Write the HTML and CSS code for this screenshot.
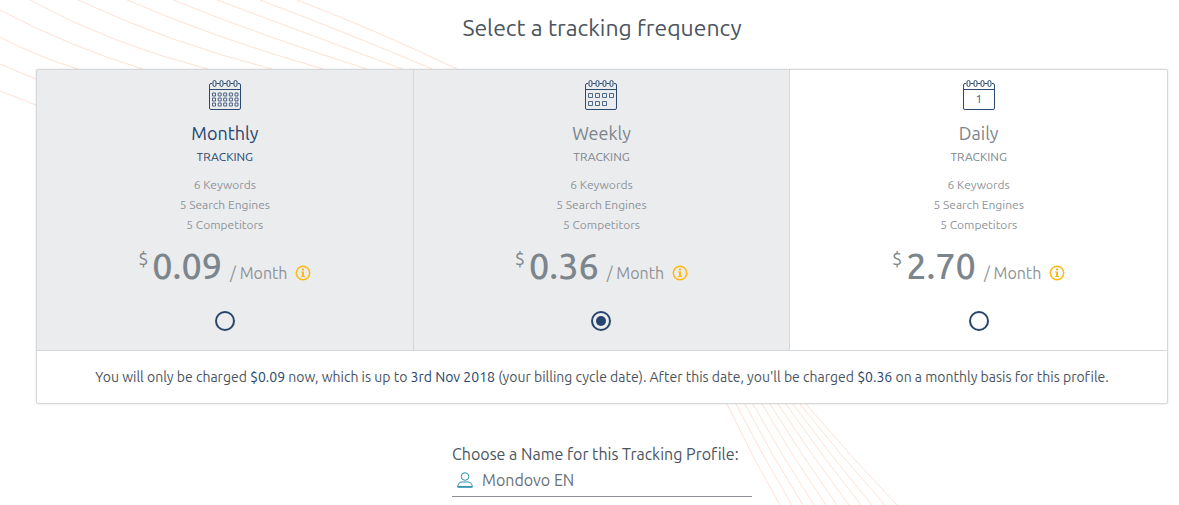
FILE: index.html
```html
<!DOCTYPE html>
<html lang="en">
<head>
  <meta charset="UTF-8" />
  <meta name="viewport" content="width=device-width, initial-scale=1.0"/>
  <title>Select a tracking frequency</title>
  <link rel="stylesheet" href="styles.css">
</head>
<body>
  <!-- decorative lines -->
  <svg class="lines" width="1179" height="505" aria-hidden="true">
    <path d="M0 91L36 105M0 64Q18 72 36 79M0 37Q38 57 78 69M0 10Q70 47 143 69M30 0Q110 44 208 69M78 0Q170 43 272 69M127 0Q215 38 323 69M173 0Q265 37 367 69M217 0L402 69M260 0Q350 34 432 69M297 0Q380 32 457 69"/>
    <path d="M727 404Q751 455 780 505M736 404Q762 455 792 505M745 404Q772 456 803 505M753 404Q782 456 814 505M762 404Q792 456 826 505M770 404Q802 456 837 505M778 404Q812 456 849 505M786 404Q822 456 861 505M793 404Q831 456 872 505M800 404Q841 456 885 505M806 404Q850 456 897 505"/>
  </svg>

  <!-- shared icons -->
  <svg class="sprite" aria-hidden="true">
    <symbol id="calendar" viewBox="0 0 32 31">
      <path d="M3 3.500H2Q.5 3.500 .5 5V28Q.5 29.500 2 29.500H30Q31.500 29.500 31.500 28V5Q31.500 3.500 30 3.500H29M7.500 3.500H10.500M14.500 3.500H17.500M21.500 3.500H24.500M.5 9.500H31.500"/>
      <rect x="4" y=".5" width="3" height="6" rx="1.500"/>
      <rect x="11" y=".5" width="3" height="6" rx="1.500"/>
      <rect x="18" y=".5" width="3" height="6" rx="1.500"/>
      <rect x="25" y=".5" width="3" height="6" rx="1.500"/>
    </symbol>
    <symbol id="info" viewBox="0 0 16 16">
      <circle cx="8" cy="8" r="6.700" fill="none" stroke="currentColor" stroke-width="1.500"/>
      <path d="M7 3.500h2v2H7zM6 6.500h3v4.500h1v1H6v-1h1V7.500H6z" fill="currentColor"/>
    </symbol>
  </svg>

  <main>
    <h1>Select a tracking frequency</h1>

    <form>
      <div class="card">
        <div class="plans">
          <label class="plan shaded current">
            <svg class="calendar" width="32" height="31" aria-hidden="true">
              <use href="#calendar"/>
              <g class="days">
                <path d="M3.500 13h3v3h-3zM9.200 13h3v3h-3zM14.700 13h3v3h-3zM20.400 13h3v3h-3zM26 13h3v3h-3zM3.500 18h3v3h-3zM9.200 18h3v3h-3zM14.700 18h3v3h-3zM20.400 18h3v3h-3zM26 18h3v3h-3zM3.500 23h3v3h-3zM9.200 23h3v3h-3zM14.700 23h3v3h-3zM20.400 23h3v3h-3zM26 23h3v3h-3z"/>
              </g>
            </svg>
            <span class="name">Monthly</span>
            <span class="type">TRACKING</span>
            <span class="features">6 Keywords<br>5 Search Engines<br>5 Competitors</span>
            <span class="price">
              <span class="currency">$</span>
              <span class="amount">0.09</span>
              <span class="period">/ Month</span>
              <svg class="info" width="16" height="16"><use href="#info"/></svg>
            </span>
            <input type="radio" name="frequency" value="monthly">
          </label>

          <label class="plan shaded">
            <svg class="calendar" width="32" height="31" aria-hidden="true">
              <use href="#calendar"/>
              <g class="days">
                <path d="M3.500 13.500h4v4h-4zM10.500 13.500h4v4h-4zM17.500 13.500h4v4h-4zM24.500 13.500h4v4h-4zM3.500 21.500h4v4h-4zM10.500 21.500h4v4h-4zM17.500 21.500h4v4h-4z"/>
              </g>
            </svg>
            <span class="name">Weekly</span>
            <span class="type">TRACKING</span>
            <span class="features">6 Keywords<br>5 Search Engines<br>5 Competitors</span>
            <span class="price">
              <span class="currency">$</span>
              <span class="amount">0.36</span>
              <span class="period">/ Month</span>
              <svg class="info" width="16" height="16"><use href="#info"/></svg>
            </span>
            <input type="radio" name="frequency" value="weekly" checked>
          </label>

          <label class="plan">
            <svg class="calendar" width="32" height="31" aria-hidden="true">
              <use href="#calendar"/>
              <text x="16" y="23">1</text>
            </svg>
            <span class="name">Daily</span>
            <span class="type">TRACKING</span>
            <span class="features">6 Keywords<br>5 Search Engines<br>5 Competitors</span>
            <span class="price">
              <span class="currency">$</span>
              <span class="amount">2.70</span>
              <span class="period">/ Month</span>
              <svg class="info" width="16" height="16"><use href="#info"/></svg>
            </span>
            <input type="radio" name="frequency" value="daily">
          </label>
        </div>
        <p class="note">You will only be charged <b>$0.09</b> now, which is up to <b>3rd Nov 2018</b> (your billing cycle date). After this date, you'll be charged <b>$0.36</b> on a monthly basis for this profile.</p>
      </div>

      <div class="profile">
        <label for="profileName">Choose a Name for this Tracking Profile:</label>
        <div class="field">
          <svg class="user" width="16" height="16" aria-hidden="true">
            <circle cx="8" cy="4.500" r="3.800"/>
            <path d="M.7 15.300Q.7 10.300 5 10H11Q15.300 10.300 15.300 15.300ZM1 14.500H15"/>
          </svg>
          <input type="text" id="profileName" name="profileName" value="Mondovo EN">
        </div>
      </div>
    </form>
  </main>
</body>
</html>
```
FILE: styles.css
```css
* {
  box-sizing: border-box;
}

body {
  margin: 0;
  background: #fff;
  color: #4a545e;
  font-family: Ubuntu, "Noto Sans", sans-serif;
  font-variant-ligatures: none;
}

.lines {
  position: absolute;
  top: 0;
  left: 0;
  z-index: -1;
  fill: none;
  stroke: #fde2d4;
}

.sprite {
  display: none;
}

main {
  padding: 12px 11px 0 36px;
}

h1 {
  margin: 0 0 25px;
  font-size: 23px;
  font-weight: 400;
  line-height: 32px;
  text-align: center;
}

.card {
  border: 1px solid #d5d8db;
  border-radius: 2px;
  background: #fff;
  box-shadow: 0 0 2px rgba(0, 0, 0, 0.15);
}

.plans {
  display: grid;
  grid-template-columns: repeat(3, 1fr);
  border-bottom: 1px solid #d5d8db;
}

.plan {
  display: flex;
  flex-direction: column;
  align-items: center;
  padding: 10px 0 19px;
  color: #7d858c;
  cursor: pointer;
}

.shaded {
  border-right: 1px solid #d5d8db;
  background: #ebecee;
}

.calendar {
  fill: none;
  stroke: #2b4a70;
}

.calendar text {
  fill: #4b6585;
  stroke: none;
  font-size: 12px;
  text-anchor: middle;
}

.days {
  opacity: 0.8;
}

.name {
  margin-top: 10px;
  font-size: 18px;
  line-height: 24px;
}

.type {
  margin-top: 2px;
  font-size: 12px;
  line-height: 20px;
}

.current .name,
.current .type {
  color: #27456c;
}

.features {
  margin-top: 8px;
  color: #8e9499;
  font-size: 12px;
  line-height: 20px;
  text-align: center;
}

.price {
  display: flex;
  align-items: baseline;
  margin-top: 8px;
  line-height: 46px;
}

.currency {
  align-self: flex-start;
  margin-right: 4px;
  font-size: 18px;
  line-height: 30px;
}

.amount {
  font-size: 36px;
  font-weight: 500;
}

.period {
  margin: 0 8px;
  color: #8e9499;
  font-size: 16px;
}

.info {
  align-self: center;
  margin-top: 6px;
  color: #fdb913;
}

input[type="radio"] {
  appearance: none;
  width: 20px;
  height: 20px;
  margin: 15px 0 0;
  padding: 3px;
  border: 2px solid #27456c;
  border-radius: 50%;
}

input[type="radio"]:checked {
  background: #27456c content-box;
}

.note {
  margin: 0;
  padding: 14px 0;
  font-size: 14px;
  line-height: 24px;
  text-align: center;
}

.note b {
  color: #27456c;
  font-weight: 400;
}

.profile {
  width: 300px;
  margin: 39px auto 0;
  font-size: 16px;
}

.profile label {
  display: block;
  line-height: 22px;
}

.field {
  display: flex;
  align-items: center;
  gap: 9px;
  padding: 0 0 1px 5px;
  border-bottom: 1px solid #8c9198;
}

.user {
  fill: none;
  stroke: #2f93ad;
}

.field input {
  flex: 1;
  min-width: 0;
  height: 30px;
  padding: 0;
  border: none;
  background: none;
  color: #68717a;
  font: inherit;
}
```
